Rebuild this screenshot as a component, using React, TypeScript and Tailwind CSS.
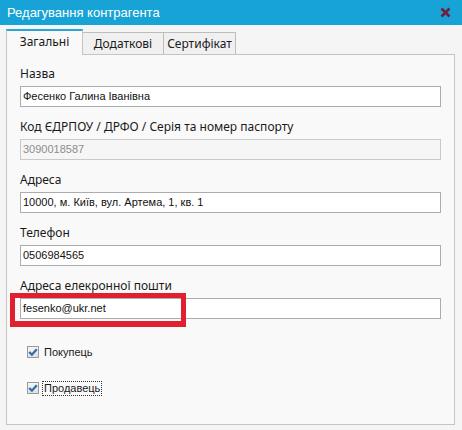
import type { ReactNode } from "react"

const fields = [
  { label: "Назва", value: "Фесенко Галина Іванівна" },
  { label: "Код ЄДРПОУ / ДРФО / Серія та номер паспорту", value: "3090018587", disabled: true },
  { label: "Адреса", value: "10000, м. Київ, вул. Артема, 1, кв. 1" },
  { label: "Телефон", value: "0506984565" },
]

function Field({ label, value, disabled, children }: { label: string; value: string; disabled?: boolean; children?: ReactNode }) {
  return (
    <div className="relative flex flex-col">
      <div className="h-[15px] leading-[15px]">{label}</div>
      <div
        className={`mt-[5px] h-[21px] border px-[2px] text-[11px] leading-[19px] [font-family:'Liberation_Sans',sans-serif] ${
          disabled ? "border-[#c9c9c9] bg-[#f6f6f6] text-[#8d8d8d]" : "border-[#acacac] bg-white text-[#111]"
        }`}
      >
        {value}
      </div>
      {children}
    </div>
  )
}

function Checkbox({ label, focused }: { label: string; focused?: boolean }) {
  return (
    <div className="flex h-[16px] items-center">
      <span className="flex size-[12px] items-center justify-center border border-[#9a9a9a] bg-gradient-to-b from-[#f6f6f6] to-[#e0e0e0]">
        <svg width="10" height="10" viewBox="0 0 10 10">
          <path d="M1.2 5 L3.9 7.7 L8.8 2.2" fill="none" stroke="#2b6fb0" strokeWidth="2.3" />
        </svg>
      </span>
      <span
        className={`ml-[3px] px-[1px] text-[11px] leading-[13px] [font-family:'Liberation_Sans',sans-serif] ${
          focused ? "border border-dotted border-[#333]" : "border border-transparent"
        }`}
      >
        {label}
      </span>
    </div>
  )
}

export default function App() {
  return (
    <div className="h-[430px] w-[462px] bg-[#f5f5f5] text-[12px] text-[#1a1a1a] [font-family:'Noto_Sans',sans-serif]">
      <div className="flex h-[25px] items-center justify-between bg-[#17a3d5] pl-[7px] pr-[11px] text-[13px] text-white [font-family:'Liberation_Sans',sans-serif]">
        <span>Редагування контрагента</span>
        <svg width="11" height="11" viewBox="0 0 11 11">
          <path d="M1.5 1.5 L9.5 9.5 M9.5 1.5 L1.5 9.5" stroke="#6e1f3c" strokeWidth="2.6" />
        </svg>
      </div>

      <div className="px-[6px] pt-[3px]">
        <div className="flex h-[26px] items-end">
          <div className="relative z-10 -mb-px flex h-[26px] w-[77px] items-center justify-center border border-b-0 border-[#c4c4c4] border-t-[#2aa6d6] border-t-2 bg-[#f9f9f9] pb-[2px]">
            Загальні
          </div>
          <div className="flex h-[22px] w-[81px] items-center justify-center border border-l-0 border-b-0 border-[#bdbdbd] bg-[#f0f0f0]">
            Додаткові
          </div>
          <div className="flex h-[22px] w-[72px] items-center justify-center border border-l-0 border-b-0 border-[#bdbdbd] bg-[#f0f0f0]">
            Сертифікат
          </div>
        </div>

        <div className="flex h-[371px] w-[449px] flex-col border border-[#c4c4c4] bg-[#f9f9f9] px-[13px] pt-[11px]">
          <div className="flex flex-col gap-[12px]">
            {fields.map((f) => (
              <Field key={f.label} label={f.label} value={f.value} disabled={f.disabled} />
            ))}
            <Field label="Адреса елекронної пошти" value="fesenko@ukr.net">
              <div className="pointer-events-none absolute left-[-10px] top-[15px] h-[34px] w-[176px] border-[5px] border-b-[6px] border-[#e0202f]" />
            </Field>
          </div>

          <div className="ml-[7px] mt-[25px] flex flex-col gap-[20px]">
            <Checkbox label="Покупець" />
            <Checkbox label="Продавець" focused />
          </div>
        </div>
      </div>
    </div>
  )
}
